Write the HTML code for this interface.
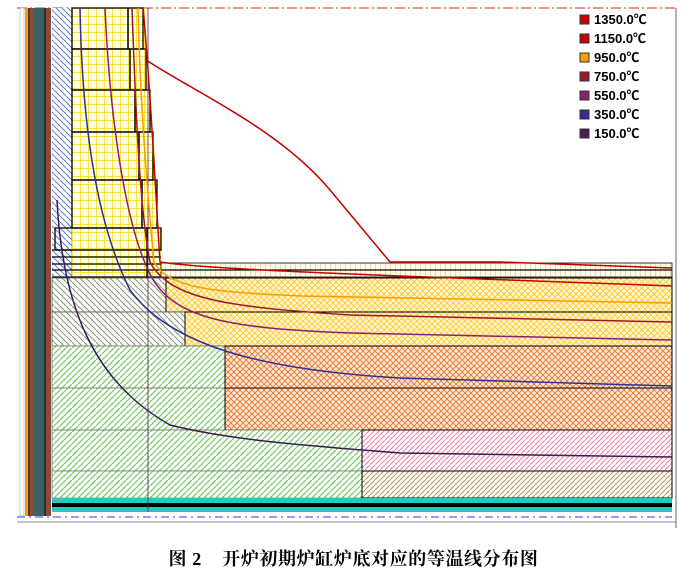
<!DOCTYPE html>
<html><head><meta charset="utf-8"><style>
html,body{margin:0;padding:0;background:#fff;width:699px;height:574px;overflow:hidden}
svg{position:absolute;left:0;top:0}
.cap{position:absolute;left:0;width:699px;top:545px;text-align:center;font:bold 18px "Liberation Serif","Noto Serif CJK SC","Noto Sans CJK SC",serif;color:#000;letter-spacing:0.6px;padding-left:4px}
.lg{font:bold 13px "Liberation Sans","Noto Sans CJK SC",sans-serif}
</style></head><body>
<svg width="699" height="574" xmlns="http://www.w3.org/2000/svg">
<defs>
<pattern id="blue" width="6" height="6" patternUnits="userSpaceOnUse"><rect width="6" height="6" fill="#fff"/><path d="M0,0L6,6" stroke="#5a7ae0" stroke-width="1"/></pattern>
<pattern id="yg" width="8" height="8" patternUnits="userSpaceOnUse"><rect width="8" height="8" fill="#fffde0"/><path d="M0,0H8M0,0V8" stroke="#f5d800" stroke-width="1.4"/></pattern>
<pattern id="grey" width="6" height="6" patternUnits="userSpaceOnUse"><rect width="6" height="6" fill="#fff"/><path d="M0,0L6,6" stroke="#8a9878" stroke-width="1.1"/></pattern>
<pattern id="green" width="6" height="6" patternUnits="userSpaceOnUse"><rect width="6" height="6" fill="#fff"/><path d="M6,0L0,6" stroke="#74c860" stroke-width="1.2"/></pattern>
<pattern id="yx" width="6" height="6" patternUnits="userSpaceOnUse"><rect width="6" height="6" fill="#fff6d0"/><path d="M0,0L6,6M6,0L0,6" stroke="#ffc830" stroke-width="0.9"/></pattern>
<pattern id="ox" width="6" height="6" patternUnits="userSpaceOnUse"><rect width="6" height="6" fill="#fde8d8"/><path d="M0,0L6,6M6,0L0,6" stroke="#e8752a" stroke-width="0.9"/></pattern>
<pattern id="pink" width="5" height="5" patternUnits="userSpaceOnUse"><rect width="5" height="5" fill="#fff"/><path d="M5,0L0,5" stroke="#f07aa8" stroke-width="1"/></pattern>
<pattern id="brn" width="5" height="5" patternUnits="userSpaceOnUse"><rect width="5" height="5" fill="#fff"/><path d="M5,0L0,5" stroke="#b8905a" stroke-width="1"/></pattern>
<pattern id="vb" width="5" height="14" patternUnits="userSpaceOnUse"><rect width="5" height="14" fill="#fffbe8"/><path d="M0,0V14" stroke="#c8b060" stroke-width="0.8"/></pattern>
</defs>
<line x1="17" y1="8" x2="676" y2="8" stroke="#e02020" stroke-dasharray="10,3,2,3" stroke-width="1"/>
<line x1="676" y1="8" x2="676" y2="528" stroke="#666" stroke-width="1"/>
<line x1="17" y1="522" x2="676" y2="522" stroke="#888"/>
<rect x="20" y="8" width="4" height="508" fill="#fff" stroke="#999" stroke-width="0.5"/>
<rect x="25" y="8" width="3" height="508" fill="#f4a000"/>
<rect x="28" y="8" width="2" height="508" fill="#5a3a30"/>
<rect x="30" y="8" width="3" height="508" fill="#8b4a3a"/>
<rect x="33" y="8" width="11" height="508" fill="#3a6262"/>
<rect x="44" y="8" width="2" height="508" fill="#2a3030"/>
<rect x="46" y="8" width="5" height="508" fill="#8b4a3a"/>
<rect x="52" y="8" width="20" height="270" fill="url(#blue)"/>
<line x1="72" y1="8" x2="72" y2="278" stroke="#888"/>
<path d="M72,8H145V49H146V90H150V132H153V180H157V228H161V278H72Z" fill="url(#yg)"/>
<g fill="none" stroke="#000" stroke-width="1.3">
<rect x="72" y="8" width="56" height="41"/><rect x="128" y="8" width="15" height="41"/>
<rect x="72" y="49" width="58" height="41"/><rect x="130" y="49" width="16" height="41"/>
<rect x="72" y="90" width="63" height="42"/><rect x="135" y="90" width="15" height="42"/>
<rect x="72" y="132" width="67" height="48"/><rect x="139" y="132" width="14" height="48"/>
<rect x="72" y="180" width="70" height="48"/><rect x="142" y="180" width="15" height="48"/>
<rect x="55" y="228" width="92" height="22"/><rect x="147" y="228" width="14" height="22"/>
<path d="M52,250H161M52,257H161M52,264H161M52,270H161M52,277H161M147,250V277"/>
</g>
<rect x="161" y="263" width="511" height="14" fill="url(#vb)" stroke="#333"/>
<line x1="161" y1="270" x2="672" y2="270" stroke="#000" stroke-width="1.3"/>
<rect x="52" y="278" width="114" height="34" fill="url(#grey)" stroke="#555" stroke-width="0.8"/>
<rect x="166" y="278" width="506" height="34" fill="url(#yx)" stroke="#000"/>
<rect x="52" y="312" width="133" height="34" fill="url(#grey)" stroke="#555" stroke-width="0.8"/>
<rect x="185" y="312" width="487" height="34" fill="url(#yx)" stroke="#000"/>
<rect x="52" y="346" width="173" height="42" fill="url(#green)" stroke="#777" stroke-width="0.8"/>
<rect x="225" y="346" width="447" height="42" fill="url(#ox)" stroke="#000"/>
<rect x="52" y="388" width="173" height="42" fill="url(#green)" stroke="#777" stroke-width="0.8"/>
<rect x="225" y="388" width="447" height="42" fill="url(#ox)" stroke="#000"/>
<rect x="52" y="430" width="310" height="41" fill="url(#green)" stroke="#777" stroke-width="0.8"/>
<rect x="362" y="430" width="310" height="41" fill="url(#pink)" stroke="#000"/>
<rect x="52" y="471" width="310" height="27" fill="url(#green)" stroke="#777" stroke-width="0.8"/>
<rect x="362" y="471" width="310" height="27" fill="url(#brn)" stroke="#000"/>
<rect x="52" y="498" width="620" height="5" fill="#2ec4c4"/>
<rect x="52" y="503" width="620" height="4" fill="#000"/>
<rect x="52" y="507" width="620" height="5" fill="#2ec4c4"/>
<line x1="148" y1="8" x2="148" y2="512" stroke="#552255" stroke-width="0.8"/>
<line x1="17" y1="517" x2="672" y2="517" stroke="#7a7aff" stroke-width="1.5" stroke-dasharray="8,4,2,4"/>
<g fill="none" stroke-width="1.5">
<path d="M146,60C200,95 280,130 330,190L390,262H500L672,268" stroke="#c00000"/>
<path d="M143,8C150,80 156,200 160,262C200,268 300,272 400,276L672,286" stroke="#c80000"/>
<path d="M138,8C140,100 148,200 154,262C170,292 230,292 300,296L672,303" stroke="#f5a000"/>
<path d="M132,8C136,120 140,210 150,262C170,300 230,307 350,315L672,322" stroke="#9a1a2a"/>
<path d="M105,8C110,120 125,220 148,270C170,320 230,328 350,333L672,340" stroke="#8a2070"/>
<path d="M80,8C82,120 95,220 130,290C170,345 260,370 400,378L672,386" stroke="#303090"/>
<path d="M57,200C62,300 90,380 170,425C230,440 300,445 400,453L672,457" stroke="#3a1a50"/>
</g>
<g class="lg">
<rect x="580" y="15" width="9" height="9" fill="#c80000" stroke="#333"/><text x="594" y="24">1350.0℃</text>
<rect x="580" y="34" width="9" height="9" fill="#c80000" stroke="#333"/><text x="594" y="43">1150.0℃</text>
<rect x="580" y="53" width="9" height="9" fill="#f5a000" stroke="#333"/><text x="594" y="62">950.0℃</text>
<rect x="580" y="72" width="9" height="9" fill="#9a1a2a" stroke="#333"/><text x="594" y="81">750.0℃</text>
<rect x="580" y="91" width="9" height="9" fill="#8a2070" stroke="#333"/><text x="594" y="100">550.0℃</text>
<rect x="580" y="110" width="9" height="9" fill="#303090" stroke="#333"/><text x="594" y="119">350.0℃</text>
<rect x="580" y="129" width="9" height="9" fill="#4a1a5a" stroke="#333"/><text x="594" y="138">150.0℃</text>
</g>
</svg>
<div class="cap">图 2&nbsp;&nbsp;&nbsp;&nbsp;开炉初期炉缸炉底对应的等温线分布图</div>
</body></html>
